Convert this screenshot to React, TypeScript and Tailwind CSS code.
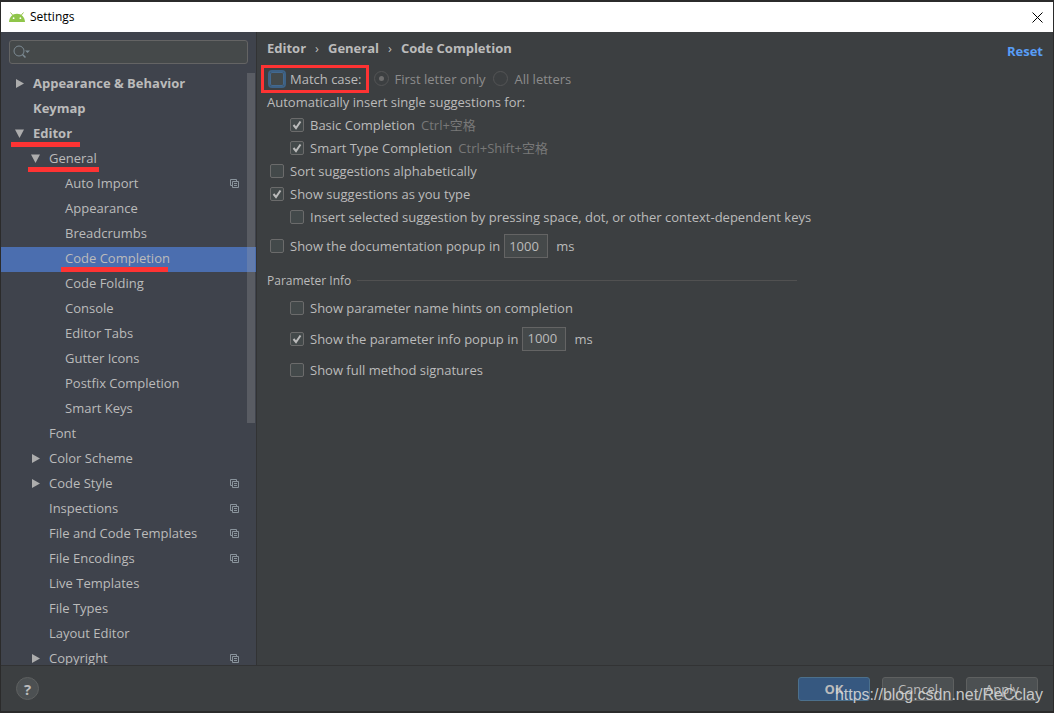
import { useState } from "react";
import type { ReactNode } from "react";

interface TreeItem {
  name: string;
  level: 0 | 1 | 2;
  arrow?: "open" | "closed";
  project?: boolean;
  selected?: boolean;
  mark?: string;
}

const items: TreeItem[] = [
  { name: "Appearance & Behavior", level: 0, arrow: "closed" },
  { name: "Keymap", level: 0 },
  { name: "Editor", level: 0, arrow: "open", mark: "left-[10px] w-[69px] bottom-0" },
  { name: "General", level: 1, arrow: "open", mark: "left-[27px] w-[71px] bottom-0" },
  { name: "Auto Import", level: 2, project: true },
  { name: "Appearance", level: 2 },
  { name: "Breadcrumbs", level: 2 },
  { name: "Code Completion", level: 2, selected: true, mark: "left-[60px] w-[107px] bottom-0" },
  { name: "Code Folding", level: 2 },
  { name: "Console", level: 2 },
  { name: "Editor Tabs", level: 2 },
  { name: "Gutter Icons", level: 2 },
  { name: "Postfix Completion", level: 2 },
  { name: "Smart Keys", level: 2 },
  { name: "Font", level: 1 },
  { name: "Color Scheme", level: 1, arrow: "closed" },
  { name: "Code Style", level: 1, arrow: "closed", project: true },
  { name: "Inspections", level: 1, project: true },
  { name: "File and Code Templates", level: 1, project: true },
  { name: "File Encodings", level: 1, project: true },
  { name: "Live Templates", level: 1 },
  { name: "File Types", level: 1 },
  { name: "Layout Editor", level: 1 },
  { name: "Copyright", level: 1, arrow: "closed", project: true },
];

const levelPadding = ["pl-3.5 font-bold", "pl-[30px]", "pl-[46px]"];

function Arrow({ state }: { state?: "open" | "closed" }) {
  return (
    <svg width="10" height="9" viewBox="0 0 10 9" className="shrink-0" fill="#adadad">
      {state === "closed" && <path d="M1 0 L9 4.5 L1 9 Z" />}
      {state === "open" && <path d="M0 0.5 L9 0.5 L4.5 9 Z" />}
    </svg>
  );
}

function ProjectIcon() {
  return (
    <svg width="9" height="9" viewBox="0 0 9 9" className="ml-auto shrink-0" fill="none" stroke="#8a949c">
      <path d="M2.5 6.5 H0.5 V0.5 H6.5 V2" />
      <path d="M2.5 2.5 H8.5 V8.5 H2.5 Z" />
      <path d="M4 4.5 H7 M4 6.5 H7" />
    </svg>
  );
}

function AndroidIcon() {
  return (
    <svg width="16" height="10" viewBox="0 0 16 10" className="shrink-0">
      <path d="M1.5 0.5 L4 3.5 M14.5 0.5 L12 3.5" stroke="#97c04c" strokeWidth="1" />
      <path d="M0 10 C0.3 5 3.5 1.8 8 1.8 C12.5 1.8 15.7 5 16 10 Z" fill="#8fc549" />
      <circle cx="4.6" cy="6.2" r="0.9" fill="#fff" />
      <circle cx="11.4" cy="6.2" r="0.9" fill="#fff" />
    </svg>
  );
}

interface CheckProps {
  label: string;
  checked?: boolean;
  focused?: boolean;
  children?: ReactNode;
}

function Check({ label, checked = false, focused = false, children }: CheckProps) {
  const [on, setOn] = useState(checked);
  return (
    <label className="flex items-center gap-1.5">
      <span className="relative flex">
        <input
          type="checkbox"
          checked={on}
          onChange={(e) => setOn(e.target.checked)}
          className={
            focused
              ? "size-3.5 appearance-none rounded-[2px] border border-[#43698f] bg-[#43494a] outline-2 outline-[#3d6185]"
              : "size-3.5 appearance-none rounded-[2px] border border-[#6b6b6b] bg-[#43494a]"
          }
        />
        {on && (
          <svg width="14" height="14" viewBox="0 0 14 14" className="pointer-events-none absolute inset-0" fill="none">
            <path d="M3.5 7 L6 10 L10.5 3.5" stroke="#bbbbbb" strokeWidth="2" />
          </svg>
        )}
      </span>
      {label}
      {children}
    </label>
  );
}

function Radio({ label, checked = false }: { label: string; checked?: boolean }) {
  return (
    <label className="flex items-center gap-1.5 text-[#8c8c8c]">
      <span className="relative flex">
        <input
          type="radio"
          name="case"
          disabled
          defaultChecked={checked}
          className="peer size-[15px] appearance-none rounded-full border border-[#545556]"
        />
        <span className="pointer-events-none absolute inset-[5px] hidden rounded-full bg-[#6e6e6e] peer-checked:block" />
      </span>
      {label}
    </label>
  );
}

function Delay({ label }: { label: string }) {
  return (
    <>
      <input
        type="text"
        aria-label={label}
        defaultValue="1000"
        className="ml-1 h-6 w-11 border border-[#646464] bg-[#45494a] px-1 pb-px text-[13px] text-[#bbbbbb] outline-none"
      />
      <span className="ml-2">ms</span>
    </>
  );
}

function Sidebar() {
  return (
    <aside className="flex w-64 shrink-0 flex-col border-r border-[#323334] bg-[#3f434c]">
      <div className="relative mx-2 my-2 flex h-6">
        <input
          type="text"
          aria-label="Search settings"
          className="w-full rounded-[3px] border border-[#646464] bg-[#45494a] pl-6 text-[13px] outline-none"
        />
        <svg width="18" height="14" viewBox="0 0 18 14" className="absolute top-[5px] left-1" fill="none">
          <circle cx="6" cy="6" r="5" stroke="#7d8b94" />
          <path d="M9.5 9.5 L12.5 12.5" stroke="#7d8b94" strokeWidth="1.5" />
          <path d="M12 5.5 H17 L14.5 8 Z" fill="#7d8b94" />
        </svg>
      </div>
      <nav className="relative min-h-0 flex-1 overflow-hidden">
        <ul>
          {items.map((item) => (
            <li key={item.name + item.level} className="relative">
              <a
                href="#"
                className={`flex h-[25px] items-center gap-2 pr-[17px] pb-[3px] ${levelPadding[item.level]} ${
                  item.selected ? "bg-[#4b6eaf]" : ""
                }`}
              >
                <Arrow state={item.arrow} />
                {item.name}
                {item.project && <ProjectIcon />}
              </a>
              {item.mark && <span className={`absolute z-10 h-[5px] bg-[#fe3333] ${item.mark}`} />}
            </li>
          ))}
        </ul>
        <div className="absolute top-px right-px h-[350px] w-2 bg-[#a6a6a6]/25" />
      </nav>
    </aside>
  );
}

function Content() {
  return (
    <main className="min-w-0 flex-1 overflow-hidden pl-2.5">
      <div className="flex h-8 items-center justify-between pr-2.5 font-bold">
        <div className="flex items-center gap-[9px]">
          <span>Editor</span>
          <span className="font-normal">›</span>
          <span>General</span>
          <span className="font-normal">›</span>
          <span>Code Completion</span>
        </div>
        <button className="pt-1.5 text-[#589df6]">Reset</button>
      </div>

      <div className="mt-[3px] flex h-[23px] items-center pl-[3px]">
        <div className="relative mr-3">
          <Check label="Match case:" focused />
          <span className="pointer-events-none absolute -inset-y-1 -right-[7px] -left-[9px] border-3 border-[#fe3333]" />
        </div>
        <Radio label="First letter only" checked />
        <div className="ml-2">
          <Radio label="All letters" />
        </div>
      </div>
      <div className="flex h-[23px] items-center">Automatically insert single suggestions for:</div>
      <div className="flex h-[23px] items-center pl-[23px]">
        <Check label="Basic Completion" checked>
          <span className="text-[#787878]">Ctrl+空格</span>
        </Check>
      </div>
      <div className="flex h-[23px] items-center pl-[23px]">
        <Check label="Smart Type Completion" checked>
          <span className="text-[#787878]">Ctrl+Shift+空格</span>
        </Check>
      </div>
      <div className="flex h-[23px] items-center pl-[3px]">
        <Check label="Sort suggestions alphabetically" />
      </div>
      <div className="flex h-[23px] items-center pl-[3px]">
        <Check label="Show suggestions as you type" checked />
      </div>
      <div className="flex h-[23px] items-center pl-[23px]">
        <Check label="Insert selected suggestion by pressing space, dot, or other context-dependent keys" />
      </div>
      <div className="flex h-9 items-center pl-[3px]">
        <Check label="Show the documentation popup in" />
        <Delay label="Documentation popup delay" />
      </div>

      <div className="mt-1 flex h-6 max-w-[530px] items-center gap-1.5">
        <h2 className="pt-0.5 text-xs">Parameter Info</h2>
        <span className="h-px flex-1 bg-[#515151]" />
      </div>
      <div className="flex h-[31px] items-center pl-[23px]">
        <Check label="Show parameter name hints on completion" />
      </div>
      <div className="flex h-[31px] items-center pl-[23px]">
        <Check label="Show the parameter info popup in" checked />
        <Delay label="Parameter info popup delay" />
      </div>
      <div className="flex h-[31px] items-center pl-[23px]">
        <Check label="Show full method signatures" />
      </div>
    </main>
  );
}

export default function App() {
  return (
    <div className="flex h-screen flex-col bg-[#2b2b2b] pt-0.5 font-['Open_Sans','Noto_Sans_CJK_SC',sans-serif] text-[13px] leading-5 whitespace-nowrap text-[#bbbbbb]">
      <div className="mx-px mb-0.5 flex min-h-0 flex-1 flex-col bg-[#3c3f41]">
        <header className="flex h-[30px] shrink-0 items-center gap-[5px] bg-white px-2 text-black">
          <AndroidIcon />
          <h1 className="text-xs">Settings</h1>
          <button aria-label="Close" className="ml-auto pr-0.5">
            <svg width="11" height="11" viewBox="0 0 11 11" fill="none" stroke="#000">
              <path d="M0.5 0.5 L10.5 10.5 M10.5 0.5 L0.5 10.5" />
            </svg>
          </button>
        </header>

        <div className="flex min-h-0 flex-1">
          <Sidebar />
          <Content />
        </div>

        <footer className="relative flex h-[46px] shrink-0 items-center gap-3 border-t border-[#323334] px-[15px]">
          <button className="mr-auto size-[23px] rounded-full border border-[#5e6060] bg-[#4c5052] text-[15px] leading-5 font-bold">
            ?
          </button>
          <button className="h-6 w-[72px] rounded-[3px] border border-[#4c708c] bg-[#365880] font-bold">OK</button>
          <button className="h-6 w-[72px] rounded-[3px] border border-[#5e6060] bg-[#4c5052]">Cancel</button>
          <button className="h-6 w-[72px] rounded-[3px] border border-[#5e6060] bg-[#4c5052]">Apply</button>
          <span className="pointer-events-none absolute right-2.5 bottom-1 font-['Liberation_Sans',sans-serif] text-base text-[#d8d8d8]/90">
            https://blog.csdn.net/ReCclay
          </span>
        </footer>
      </div>
    </div>
  );
}
